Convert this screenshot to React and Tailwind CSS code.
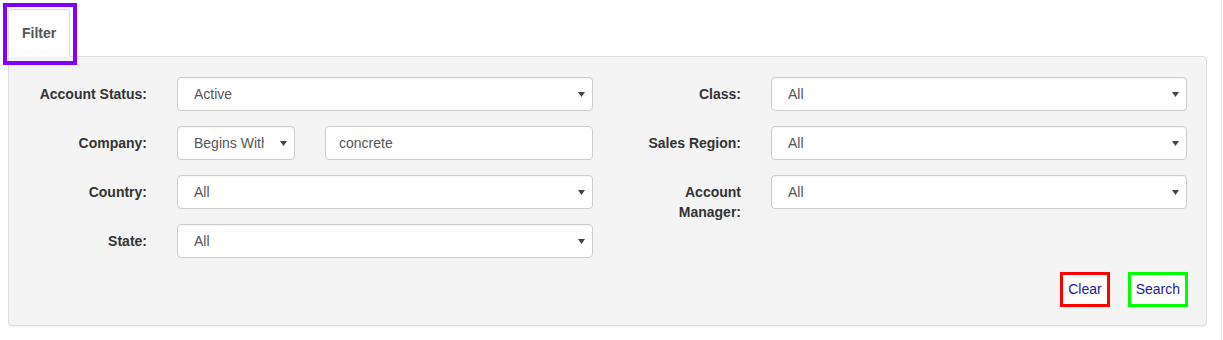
import React from "react";

function Arrow() {
  return (
    <svg width="7" height="5" viewBox="0 0 7 5" className="shrink-0 mr-[7px]">
      <path d="M0 0 H7 L3.5 5 Z" fill="#444" />
    </svg>
  );
}

function Select({ value, className = "" }) {
  return (
    <div
      className={`flex items-center h-[34px] bg-white border border-[#ccc] rounded-[4px] pl-[16px] text-[14px] text-[#555] shadow-[inset_0_1px_1px_rgba(0,0,0,0.04)] ${className}`}
    >
      <span className="flex-1 min-w-0 overflow-hidden whitespace-nowrap mr-[16px]">{value}</span>
      <Arrow />
    </div>
  );
}

function Row({ label, children }) {
  return (
    <div className="flex">
      <div className="w-[148px] shrink-0 px-[15px] pt-[7px] text-right font-bold text-[14px] leading-[20px] text-[#333]">
        {label}
      </div>
      <div className="flex-1 min-w-0 px-[15px]">{children}</div>
    </div>
  );
}

export default function App() {
  return (
    <div
      className="relative flex w-[1223px] h-[340px] bg-white"
      style={{ fontFamily: '"Liberation Sans", Arial, sans-serif' }}
    >
      <div className="w-[1221px] shrink-0 pl-[8px] pt-[9px]">
        <div className="w-[1199px]">
          <div className="flex">
            <div className="relative z-10 -mb-px h-[48px] flex items-center px-[13px] bg-white border border-[#ddd] border-b-transparent rounded-t-[4px] font-bold text-[14px] text-[#555]">
              Filter
            </div>
          </div>
          <div className="bg-[#f4f4f4] border border-[#ddd] rounded-b-[4px] rounded-tr-[4px] shadow-[0_1px_1px_rgba(0,0,0,0.06)] pl-[5px] pr-[4px] pt-[20px] pb-[18px]">
            <div className="grid grid-cols-2">
              <div className="flex flex-col gap-[15px]">
                <Row label="Account Status:">
                  <Select value="Active" />
                </Row>
                <Row label="Company:">
                  <div className="flex gap-[30px]">
                    <div className="w-[118px] shrink-0">
                      <Select value="Begins With" />
                    </div>
                    <div className="flex-1 min-w-0">
                      <div className="flex items-center h-[34px] bg-white border border-[#ccc] rounded-[4px] px-[13px] text-[14px] text-[#555]">
                        concrete
                      </div>
                    </div>
                  </div>
                </Row>
                <Row label="Country:">
                  <Select value="All" />
                </Row>
                <Row label="State:">
                  <Select value="All" />
                </Row>
              </div>
              <div className="flex flex-col gap-[15px]">
                <Row label="Class:">
                  <Select value="All" />
                </Row>
                <Row label="Sales Region:">
                  <Select value="All" />
                </Row>
                <Row label="Account Manager:">
                  <Select value="All" />
                </Row>
              </div>
            </div>
            <div className="flex justify-end gap-[18px] mt-[14px] pr-[14px]">
              <button className="h-[35px] px-[5px] bg-white border-[3px] border-[#ff0000] text-[14px] text-[#1a1a9e]">
                Clear
              </button>
              <button className="h-[35px] px-[5px] bg-white border-[3px] border-[#00ff00] text-[14px] text-[#1a1a9e]">
                Search
              </button>
            </div>
          </div>
        </div>
      </div>
      <div className="w-px h-full bg-[#e6e6e6]" />
      <div className="absolute left-[3px] top-[3px] w-[74px] h-[62px] border-[4px] border-[#7f00ff] pointer-events-none z-20" />
    </div>
  );
}
